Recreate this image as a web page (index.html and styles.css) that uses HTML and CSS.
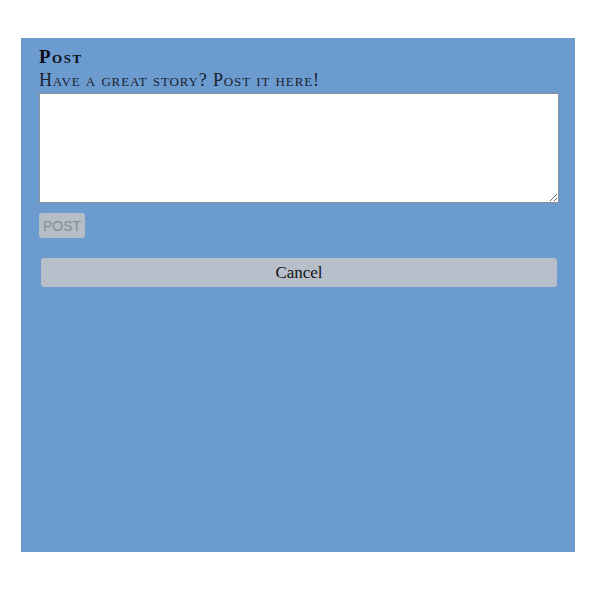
FILE: index.html
```html
<!DOCTYPE html>
<html>
<head>
<meta charset="utf-8">
<link rel="stylesheet" href="styles.css">
</head>
<body>
<div class="panel">
  <h2 class="title">Post</h2>
  <p class="subtitle">Have a great story? Post it here!</p>
  <textarea class="story"></textarea>
  <div class="actions">
    <button class="post-btn" disabled>POST</button>
  </div>
  <button class="cancel-btn">Cancel</button>
</div>
</body>
</html>
```

FILE: styles.css
```css
html, body {
  margin: 0;
  padding: 0;
  background: #ffffff;
}
.panel {
  box-sizing: border-box;
  margin: 38px 0 0 21px;
  width: 554px;
  height: 514px;
  background: #6b9bcf;
  padding: 8px 17px 0 18px;
  display: flex;
  flex-direction: column;
}
.title {
  margin: 0;
  font-family: "Liberation Serif", serif;
  font-variant: small-caps;
  font-weight: bold;
  font-size: 19px;
  line-height: 22px;
  color: #0d0f14;
  letter-spacing: 1.5px;
}
.subtitle {
  margin: 0;
  font-family: "Liberation Serif", serif;
  font-variant: small-caps;
  font-size: 18px;
  line-height: 24px;
  color: #1c2230;
  letter-spacing: 0.85px;
}
.story {
  box-sizing: border-box;
  width: 520px;
  height: 110px;
  margin: 1px 0 0 0;
  border: 1px solid #8a9099;
  background: #fff;
  resize: vertical;
  display: block;
}
.actions {
  display: flex;
  margin-top: 10px;
}
.post-btn {
  box-sizing: border-box;
  height: 25px;
  width: 46px;
  padding: 0;
  border: none;
  border-radius: 3px;
  background: #b5bdc7;
  color: #878d95;
  font-family: "Liberation Sans", Arial, sans-serif;
  font-size: 14px;
}
.cancel-btn {
  box-sizing: border-box;
  margin: 20px 0 0 2px;
  width: 516px;
  height: 29px;
  border: none;
  border-radius: 3px;
  background: #b6bfca;
  color: #111;
  font-family: "Liberation Serif", serif;
  font-size: 17px;
  padding: 0;
}
```
